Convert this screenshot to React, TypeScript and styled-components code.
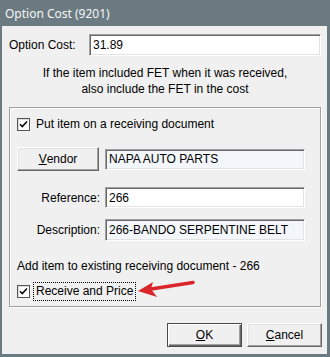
import React from "react";
import styled, { createGlobalStyle, css } from "styled-components";

const GlobalStyle = createGlobalStyle`
  html, body {
    margin: 0;
    padding: 0;
    background: #6b7b81;
  }
`;

const Window = styled.div`
  width: 330px;
  height: 357px;
  box-sizing: border-box;
  padding: 0 3px 3px 2px;
  background: #6b7b81;
  display: flex;
  flex-direction: column;
  font-family: "Liberation Sans", Arial, sans-serif;
  font-size: 12px;
  color: #000;
`;

const TitleBar = styled.div`
  height: 26px;
  flex-shrink: 0;
  display: flex;
  align-items: center;
  padding-left: 3px;
  font-family: "Noto Sans", "Open Sans", sans-serif;
  font-size: 12px;
  color: #f4f6f7;
`;

const Client = styled.div`
  flex: 1;
  background: #f0f0f0;
  display: flex;
  flex-direction: column;
  padding: 8px 6px 0 7px;
`;

const Row = styled.div<{ $top?: number }>`
  display: flex;
  align-items: center;
  margin-top: ${(p) => p.$top ?? 0}px;
`;

const Label = styled.div<{ $width: number; $right?: boolean }>`
  width: ${(p) => p.$width}px;
  flex-shrink: 0;
  text-align: ${(p) => (p.$right ? "right" : "left")};
  padding-right: ${(p) => (p.$right ? 5 : 0)}px;
  box-sizing: border-box;
`;

const TextBox = styled.div<{ $readOnly?: boolean; $height?: number }>`
  flex: 1;
  height: ${(p) => p.$height ?? 22}px;
  box-sizing: border-box;
  border: 1px solid;
  border-color: #a0a0a0 #ffffff #ffffff #a0a0a0;
  box-shadow: inset 1px 1px #696969, inset -1px -1px #e3e3e3;
  background: ${(p) => (p.$readOnly ? "#f3f7fb" : "#ffffff")};
  padding: 0 3px;
  display: flex;
  align-items: center;
  white-space: nowrap;
  overflow: hidden;
`;

const Note = styled.div`
  margin-top: 9px;
  text-align: center;
  line-height: 16px;
`;

const GroupBox = styled.div`
  position: relative;
  margin-top: 10px;
  height: 200px;
  box-sizing: border-box;
  border: 1px solid #a0a0a0;
  box-shadow: inset 1px 1px #ffffff, 1px 1px #ffffff;
  padding: 8px 15px 0 7px;
  display: flex;
  flex-direction: column;
`;

const CheckRow = styled.div<{ $top?: number }>`
  display: flex;
  align-items: center;
  height: 17px;
  margin-top: ${(p) => p.$top ?? 0}px;
`;

const Box = styled.span`
  width: 13px;
  height: 13px;
  box-sizing: border-box;
  border: 1px solid #555;
  box-shadow: inset 1px 1px #dcdcdc;
  background: #fff;
  display: flex;
  align-items: center;
  justify-content: center;
  flex-shrink: 0;
`;

const CheckText = styled.span<{ $focused?: boolean }>`
  margin-left: 4px;
  padding: 1px 2px;
  line-height: 15px;
  ${(p) =>
    p.$focused &&
    css`
      outline: 1px dotted #000;
    `}
`;

const Button = styled.div<{ $width: number; $default?: boolean }>`
  width: ${(p) => p.$width}px;
  height: 24px;
  flex-shrink: 0;
  box-sizing: border-box;
  display: flex;
  align-items: center;
  justify-content: center;
  background: #f0f0f0;
  border: 1px solid;
  border-color: #ffffff #696969 #696969 #ffffff;
  box-shadow: inset -1px -1px #a0a0a0, inset 1px 1px #e3e3e3;
  ${(p) =>
    p.$default &&
    css`
      border: 1px solid #4a4a4a;
      box-shadow: inset 1px 1px #ffffff, inset -1px -1px #696969,
        inset -2px -2px #a0a0a0;
    `}
`;

const Key = styled.span`
  text-decoration: underline;
`;

const Plain = styled.div`
  margin-top: 17px;
  line-height: 16px;
`;

const ButtonBar = styled.div`
  margin-top: 16px;
  margin-right: -1px;
  display: flex;
  justify-content: flex-end;
  gap: 5px;
`;

const Arrow = styled.svg`
  position: absolute;
  left: 126px;
  top: 172px;
`;

const Check = ({ label, focused, top }: { label: string; focused?: boolean; top?: number }) => (
  <CheckRow $top={top}>
    <Box>
      <svg width="9" height="9" viewBox="0 0 9 9">
        <path d="M1 4.2 L3.3 6.6 L8 1.6" stroke="#000" strokeWidth="1.5" fill="none" />
      </svg>
    </Box>
    <CheckText $focused={focused}>{label}</CheckText>
  </CheckRow>
);

const App = () => (
  <>
    <GlobalStyle />
    <Window>
      <TitleBar>Option Cost (9201)</TitleBar>
      <Client>
        <Row>
          <Label $width={80}>Option Cost:</Label>
          <TextBox>31.89</TextBox>
        </Row>
        <Note>
          If the item included FET when it was received,
          <br />
          also include the FET in the cost
        </Note>
        <GroupBox>
          <Check label="Put item on a receiving document" />
          <Row $top={14}>
            <Button $width={82}>
              <Key>V</Key>endor
            </Button>
            <TextBox $readOnly $height={21} style={{ marginLeft: 6 }}>
              NAPA AUTO PARTS
            </TextBox>
          </Row>
          <Row $top={16}>
            <Label $width={88} $right>
              Reference:
            </Label>
            <TextBox $height={21}>266</TextBox>
          </Row>
          <Row $top={11}>
            <Label $width={88} $right>
              Description:
            </Label>
            <TextBox $readOnly $height={22}>
              266-BANDO SERPENTINE BELT
            </TextBox>
          </Row>
          <Plain>Add item to existing receiving document - 266</Plain>
          <Check label="Receive and Price" focused top={9} />
          <Arrow width="70" height="22" viewBox="0 0 70 22">
            <line x1="15" y1="9" x2="57" y2="2.5" stroke="#d9262b" strokeWidth="3.5" strokeLinecap="round" />
            <polygon points="2,11 17,2 15,9 21,17" fill="#d9262b" />
          </Arrow>
        </GroupBox>
        <ButtonBar>
          <Button $width={75} $default>
            <Key>O</Key>K
          </Button>
          <Button $width={75}>
            <Key>C</Key>ancel
          </Button>
        </ButtonBar>
      </Client>
    </Window>
  </>
);

export default App;
